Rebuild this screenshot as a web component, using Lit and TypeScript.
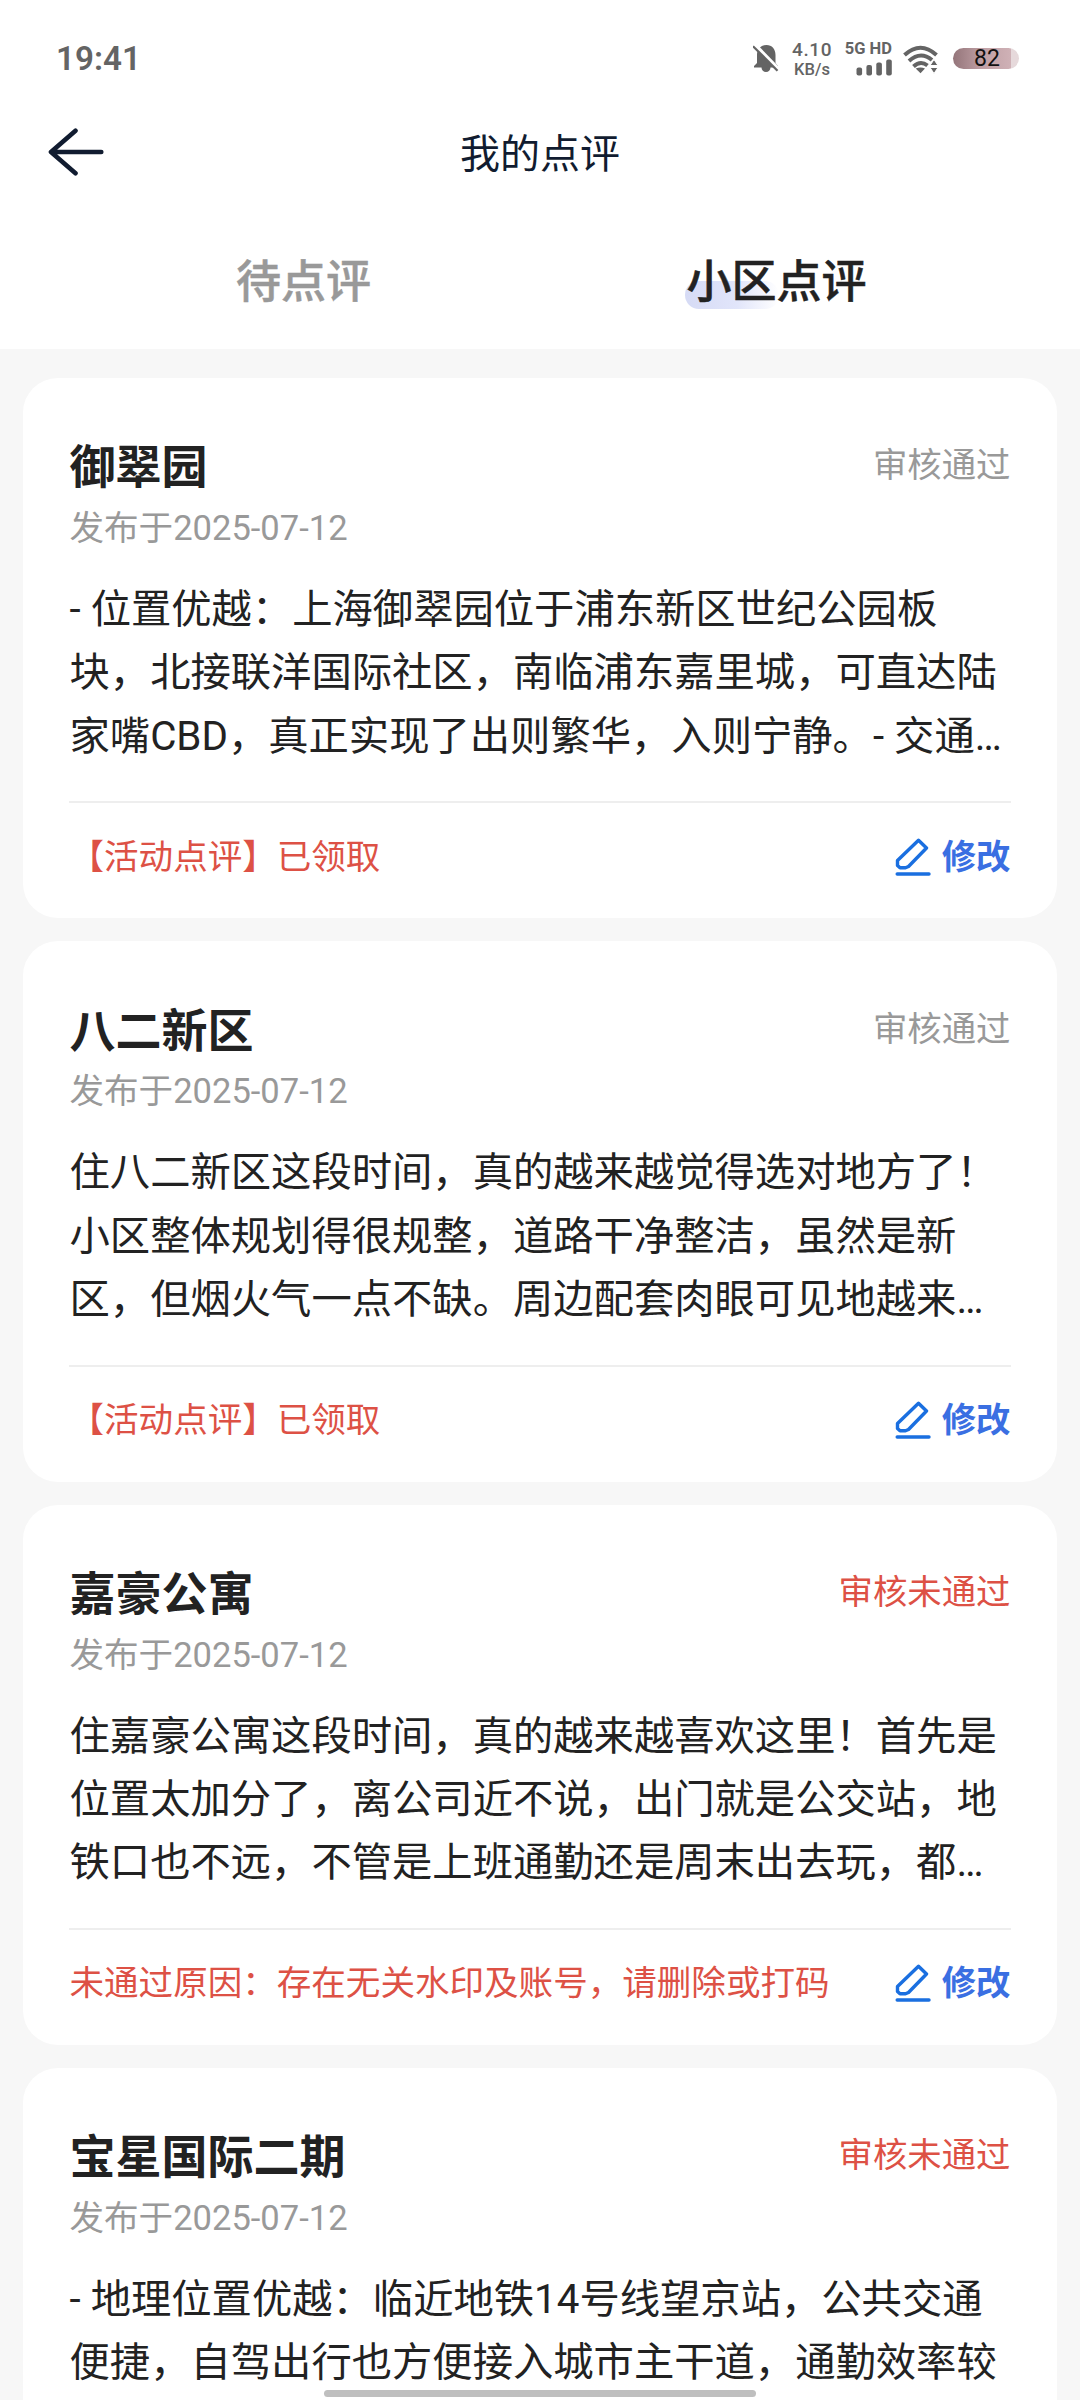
import { LitElement, html, css, svg, nothing } from "lit";
import { customElement, property } from "lit/decorators.js";
import { classMap } from "lit/directives/class-map.js";

interface Review {
  name: string;
  status: string;
  rejected: boolean;
  date: string;
  text: string;
  note?: string;
}

const REVIEWS: Review[] = [
  {
    name: "御翠园",
    status: "审核通过",
    rejected: false,
    date: "2025-07-12",
    text: "- 位置优越：上海御翠园位于浦东新区世纪公园板块，北接联洋国际社区，南临浦东嘉里城，可直达陆家嘴CBD，真正实现了出则繁华，入则宁静。- 交通…",
    note: "【活动点评】已领取",
  },
  {
    name: "八二新区",
    status: "审核通过",
    rejected: false,
    date: "2025-07-12",
    text: "住八二新区这段时间，真的越来越觉得选对地方了！小区整体规划得很规整，道路干净整洁，虽然是新区，但烟火气一点不缺。周边配套肉眼可见地越来…",
    note: "【活动点评】已领取",
  },
  {
    name: "嘉豪公寓",
    status: "审核未通过",
    rejected: true,
    date: "2025-07-12",
    text: "住嘉豪公寓这段时间，真的越来越喜欢这里！首先是位置太加分了，离公司近不说，出门就是公交站，地铁口也不远，不管是上班通勤还是周末出去玩，都…",
    note: "未通过原因：存在无关水印及账号，请删除或打码",
  },
  {
    name: "宝星国际二期",
    status: "审核未通过",
    rejected: true,
    date: "2025-07-12",
    text: "- 地理位置优越：临近地铁14号线望京站，公共交通便捷，自驾出行也方便接入城市主干道，通勤效率较",
  },
];

@customElement("status-bar")
class StatusBar extends LitElement {
  static styles = css`
    :host {
      display: flex;
      justify-content: space-between;
      height: 116px;
      padding: 0 61px 0 56px;
      box-sizing: border-box;
      color: #646464;
      font-family: Roboto, "Noto Sans CJK SC", sans-serif;
    }
    .time {
      font-size: 33.2px;
      font-weight: 600;
      line-height: 117px;
    }
    .icons {
      display: flex;
      align-items: flex-start;
    }
    .bell {
      margin: 44px 13px 0 0;
    }
    .speed {
      width: 40px;
      margin: 40px 12px 0 0;
      text-align: center;
      font-weight: 500;
    }
    .rate {
      font-size: 19px;
      line-height: 20px;
      letter-spacing: 0.6px;
    }
    .unit {
      font-size: 16.5px;
      line-height: 19px;
    }
    .cell {
      display: flex;
      flex-direction: column;
      align-items: flex-end;
      width: 48px;
      margin: 40px 11px 0 0;
    }
    .net {
      font-size: 16.5px;
      font-weight: 700;
      line-height: 17px;
      white-space: pre;
    }
    .bars {
      margin-top: 2px;
    }
    .wifi {
      margin: 45px 15px 0 0;
    }
    .battery {
      width: 66px;
      height: 21px;
      margin-top: 48px;
      border-radius: 11px;
      background: linear-gradient(90deg, #94757a 0, #c0a0a5 30px, #cfb1b6 58px, #e6d9db 58px);
      color: #111;
      font-size: 23px;
      line-height: 22px;
      text-indent: 2px;
      text-align: center;
    }
  `;

  render() {
    return html`
      <div class="time">19:41</div>
      <div class="icons">
        <svg class="bell" width="26" height="30" viewBox="0 0 26 30">
          <path
            d="M1 23.5V22l3-3v-8C4 5 8 1 13.500 1S22.500 5 22.500 11v8l2.500 3v1.500H17.500a4.500 4.500 0 0 1-9 0Z"
            fill="#646464"
          />
          <path d="M1.500 0.500 26 26" stroke="#fff" stroke-width="4" />
          <path d="M0 2.200 24.500 26.800" stroke="#646464" stroke-width="2.300" />
        </svg>
        <div class="speed">
          <div class="rate">4.10</div>
          <div class="unit">KB/s</div>
        </div>
        <div class="cell">
          <div class="net">5G HD</div>
          <svg class="bars" width="36" height="17" viewBox="0 0 36 17">
            ${[8, 10.5, 13, 16].map(
              (h, i) => svg`<rect x=${0.5 + i * 9.9} y=${16.5 - h} width="5.600" height=${h} rx="2" fill="#646464" />`
            )}
          </svg>
        </div>
        <svg class="wifi" width="35" height="29" viewBox="0 0 35 29">
          <g fill="none" stroke="#646464" stroke-width="4">
            <path d="M1.500 10Q17.500-4.500 33.500 10" />
            <path d="M6 16Q17.500 5.500 29 15" />
            <path d="M10.500 21.500Q17.500 15 24.500 20.500" />
          </g>
          <path d="M17.500 28.200 12.700 23.600Q17.500 21.200 22 23.600Z" fill="#646464" />
          <path d="M31 14.500 35 20.500H27ZM31 28.500 27 22.500H35Z" fill="#646464" stroke="#fff" stroke-width="1" />
        </svg>
        <div class="battery">82</div>
      </div>
    `;
  }
}

@customElement("review-card")
class ReviewCard extends LitElement {
  @property({ attribute: false }) review!: Review;

  static styles = css`
    :host {
      display: block;
      flex: none;
      height: 540.4px;
      padding: 55.400px 46.500px 0 46.500px;
      box-sizing: border-box;
      border-radius: 34.600px;
      background: #fff;
      color: #222;
    }
    .head {
      display: flex;
      justify-content: space-between;
      align-items: center;
      height: 64px;
    }
    .name {
      padding-top: 4px;
      font-size: 46px;
      font-weight: 700;
      line-height: 64px;
    }
    .status {
      color: #999;
      font-size: 34.400px;
      line-height: 60px;
    }
    .status.rejected,
    .note {
      color: #dd5145;
    }
    .date {
      height: 50px;
      margin-top: 5.600px;
      color: #999;
      font-size: 34.560px;
      line-height: 50px;
    }
    .text {
      height: 190px;
      margin: 25px -1px 0 0;
      font-size: 40.320px;
      line-height: 63.360px;
    }
    .foot {
      display: flex;
      justify-content: space-between;
      align-items: center;
      height: 107px;
      margin: 33.400px -0.500px 0 -0.500px;
      padding: 0 0.500px;
      border-top: 2px solid #eee;
      font-size: 34.560px;
      line-height: 50px;
      white-space: nowrap;
    }
    .edit {
      display: flex;
      align-items: center;
      color: #3a6fe2;
      font-size: 34.400px;
      font-weight: 700;
    }
    .pen {
      margin-right: 11px;
    }
  `;

  render() {
    const r = this.review;
    return html`
      <div class="head">
        <div class="name">${r.name}</div>
        <div class=${classMap({ status: true, rejected: r.rejected })}>${r.status}</div>
      </div>
      <div class="date">发布于${r.date}</div>
      <p class="text">${r.text}</p>
      ${r.note
        ? html`<div class="foot">
            <div class="note">${r.note}</div>
            <div class="edit">
              <svg class="pen" width="36" height="38" viewBox="0 0 36 38" fill="none" stroke="#1a6fe0" stroke-width="3.400" stroke-linejoin="round" stroke-linecap="round">
                <path d="M23.500 2.200 31.500 10 13.500 28.500 10.500 29.800H5L2.500 27.500V22.500Z" />
                <path d="M2.200 36H34" />
              </svg>
              <span>修改</span>
            </div>
          </div>`
        : nothing}
    `;
  }
}

@customElement("app-root")
class AppRoot extends LitElement {
  static styles = css`
    :host {
      display: flex;
      flex-direction: column;
      position: relative;
      width: 1080px;
      height: 2400px;
      overflow: hidden;
      background: #f7f7f7;
      font-family: Roboto, "Noto Sans CJK SC", sans-serif;
      text-spacing-trim: space-all;
    }
    .top {
      flex: none;
      height: 349px;
      background: #fff;
    }
    .nav {
      display: grid;
      grid-template-columns: 120px 1fr 120px;
      align-items: center;
      height: 72px;
    }
    .back {
      margin-left: 47px;
    }
    .title {
      padding-top: 5px;
      color: #111c30;
      font-size: 40px;
      line-height: 67px;
      text-align: center;
    }
    .tabs {
      display: grid;
      grid-template-columns: 1fr 1fr;
      padding: 62px 67px 0 67px;
      font-size: 45px;
      font-weight: 500;
      line-height: 66px;
      text-align: center;
    }
    .tab {
      color: #999;
      -webkit-text-stroke: 0.500px currentColor;
    }
    .chosen {
      position: relative;
      z-index: 0;
      display: inline-block;
      color: #222;
    }
    .chosen::before {
      content: "";
      position: absolute;
      z-index: -1;
      left: -1px;
      top: 31px;
      width: 94px;
      height: 28px;
      border-radius: 14px;
      background: linear-gradient(90deg, #d6dbf5, #e1e5fa 55%, rgba(235, 239, 252, 0));
    }
    .list {
      display: flex;
      flex-direction: column;
      gap: 23px;
      padding: 28.800px 23px 0;
    }
    .home {
      position: absolute;
      left: 324px;
      bottom: 3px;
      width: 432px;
      height: 7px;
      border-radius: 4px;
      background: #bfbfbf;
    }
  `;

  render() {
    return html`
      <header class="top">
        <status-bar></status-bar>
        <div class="nav">
          <svg class="back" width="58" height="48" viewBox="0 0 58 48" fill="none" stroke="#111c30" stroke-width="4.600" stroke-linecap="round" stroke-linejoin="round">
            <path d="M28.500 2.800 4 24 28.500 45.200M4 24H54.300" />
          </svg>
          <div class="title">我的点评</div>
        </div>
        <div class="tabs">
          <div class="tab">待点评</div>
          <div class="tab"><span class="chosen">小区点评</span></div>
        </div>
      </header>
      <main class="list">${REVIEWS.map((r) => html`<review-card .review=${r}></review-card>`)}</main>
      <div class="home"></div>
    `;
  }
}
